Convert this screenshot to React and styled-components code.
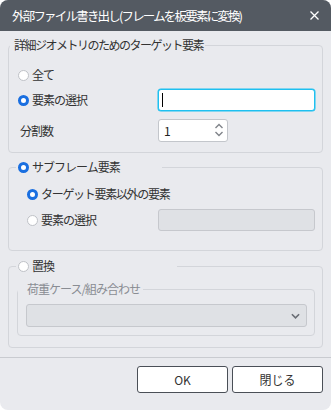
import React from 'react'
import styled, { createGlobalStyle } from 'styled-components'

const GlobalStyle = createGlobalStyle`
  html, body {
    margin: 0;
    padding: 0;
    background: #ffffff;
  }
  body {
    font-family: 'Noto Sans CJK JP', 'Noto Sans', sans-serif;
    font-size: 12px;
    letter-spacing: -1px;
    color: #333;
  }
`

function App() {
  return (
    <>
      <GlobalStyle />
      <Dialog>
        <TitleBar>
          <Title>外部ファイル書き出し(フレームを板要素に変換)</Title>
          <CloseIcon viewBox="0 0 9 9">
            <path d="M0.5 0.5 L8.5 8.5 M8.5 0.5 L0.5 8.5" />
          </CloseIcon>
        </TitleBar>

        <Body>
          <Group pad="18px 7px 11px 9px">
            <Legend width={186} left={1} indent={4} spacing={-1.5}>
              詳細ジオメトリのためのターゲット要素
            </Legend>
            <Row>
              <RadioLabel>
                <Radio />
                全て
              </RadioLabel>
            </Row>
            <Row top={3}>
              <RadioLabel>
                <Radio checked />
                要素の選択
              </RadioLabel>
              <TextInput focused>
                <Caret />
              </TextInput>
            </Row>
            <Row top={8}>
              <PlainLabel>分割数</PlainLabel>
              <Spinner>
                <span>1</span>
                <SpinArrows viewBox="0 0 10 16">
                  <path d="M1.5 6 L5 2.5 L8.5 6" />
                  <path d="M1.5 10 L5 13.5 L8.5 10" />
                </SpinArrows>
              </Spinner>
            </Row>
          </Group>

          <Group pad="15px 7px 19px 18px" top={14}>
            <Legend width={146} left={7} indent={2}>
              <RadioLabel>
                <Radio checked />
                サブフレーム要素
              </RadioLabel>
            </Legend>
            <Row>
              <RadioLabel spacing={-1.3}>
                <Radio checked />
                ターゲット要素以外の要素
              </RadioLabel>
            </Row>
            <Row top={4}>
              <RadioLabel>
                <Radio />
                要素の選択
              </RadioLabel>
              <TextInput disabled />
            </Row>
          </Group>

          <Group pad="22px 7px 11px 8px" top={15}>
            <Legend width={161} left={7} indent={2}>
              <RadioLabel>
                <Radio />
                置換
              </RadioLabel>
            </Legend>
            <InnerGroup>
              <Legend width={125} left={0} indent={9} muted>
                荷重ケース/組み合わせ
              </Legend>
              <Select>
                <ChevronDown viewBox="0 0 10 6">
                  <path d="M1 1 L5 5 L9 1" />
                </ChevronDown>
              </Select>
            </InnerGroup>
          </Group>
        </Body>

        <Footer>
          <Button>OK</Button>
          <Button>閉じる</Button>
        </Footer>
      </Dialog>
    </>
  )
}

export default App

const Dialog = styled.div`
  width: 331px;
  height: 410px;
  background: #e9eaee;
  border-radius: 8px;
  overflow: hidden;
  display: flex;
  flex-direction: column;
`

const TitleBar = styled.div`
  height: 31px;
  background: #545a62;
  display: flex;
  align-items: center;
  justify-content: space-between;
  padding: 0 12px 0 12px;
  flex-shrink: 0;
`

const Title = styled.div`
  color: #ffffff;
  font-size: 12.5px;
  letter-spacing: -1.8px;
  white-space: nowrap;
`

const CloseIcon = styled.svg`
  width: 9px;
  height: 9px;
  fill: none;
  stroke: #ffffff;
  stroke-width: 1.3;
`

const Body = styled.div`
  padding: 14px 8px 9px 8px;
  display: flex;
  flex-direction: column;
`

const Group = styled.div`
  position: relative;
  border: 1px solid #d3d5da;
  border-radius: 4px;
  padding: ${p => p.pad};
  margin-top: ${p => p.top || 0}px;
  display: flex;
  flex-direction: column;
`

const Legend = styled.div`
  position: absolute;
  top: -9px;
  left: ${p => p.left}px;
  min-width: ${p => p.width}px;
  box-sizing: border-box;
  padding: 0 2px 0 ${p => p.indent}px;
  background: #e9eaee;
  color: ${p => (p.muted ? '#8a8d93' : '#333')};
  line-height: 16px;
  font-size: 12px;
  letter-spacing: ${p => p.spacing ?? -1}px;
  white-space: nowrap;
`

const InnerGroup = styled.div`
  position: relative;
  border: 1px solid #d3d5da;
  border-radius: 4px;
  padding: 14px 7px 8px 8px;
`

const Row = styled.div`
  display: flex;
  align-items: center;
  justify-content: space-between;
  height: 22px;
  margin-top: ${p => p.top || 0}px;
`

const RadioLabel = styled.label`
  display: flex;
  align-items: center;
  gap: 3px;
  color: #333;
  font-size: 12px;
  line-height: 16px;
  letter-spacing: ${p => p.spacing ?? -1}px;
  white-space: nowrap;
`

const Radio = styled.span`
  width: 11px;
  height: 11px;
  border-radius: 50%;
  box-sizing: border-box;
  background: #fff;
  border: ${p => (p.checked ? '3px solid #1a6fe0' : '1px solid #bfc2c7')};
  display: inline-block;
  flex-shrink: 0;
`

const PlainLabel = styled.span`
  color: #333;
  padding-left: 2px;
`

const TextInput = styled.div`
  width: 157px;
  height: 22px;
  box-sizing: border-box;
  border-radius: 3px;
  border: 1px solid ${p => (p.focused ? '#1ec0f0' : '#c6c8cd')};
  box-shadow: ${p => (p.focused ? '0 0 0 0.5px #1ec0f0' : 'none')};
  background: ${p => (p.disabled ? '#dfe1e5' : '#fff')};
  display: flex;
  align-items: center;
  padding-left: 3px;
`

const Caret = styled.span`
  width: 1px;
  height: 14px;
  background: #000;
`

const Spinner = styled.div`
  width: 70px;
  height: 23px;
  box-sizing: border-box;
  border: 1px solid #c3c6cb;
  border-radius: 3px;
  background: #fff;
  display: flex;
  align-items: center;
  justify-content: space-between;
  padding: 0 3px 0 5px;
  margin-right: 87px;
  color: #222;
  font-size: 12px;
`

const SpinArrows = styled.svg`
  width: 10px;
  height: 16px;
  fill: none;
  stroke: #80848a;
  stroke-width: 1.4;
`

const Select = styled.div`
  height: 23px;
  box-sizing: border-box;
  border: 1px solid #c6c8cd;
  border-radius: 3px;
  background: #dfe1e5;
  display: flex;
  align-items: center;
  justify-content: flex-end;
  padding-right: 6px;
`

const ChevronDown = styled.svg`
  width: 9px;
  height: 6px;
  fill: none;
  stroke: #6a6e75;
  stroke-width: 1.8;
`

const Footer = styled.div`
  border-top: 1px solid #c9cbd0;
  flex: 1;
  display: flex;
  justify-content: flex-end;
  align-items: flex-start;
  gap: 4px;
  padding: 8px 8px 0 0;
`

const Button = styled.button`
  width: 91px;
  height: 27px;
  background: #fff;
  border: 1px solid #4a4f57;
  border-radius: 3px;
  font-family: 'Noto Sans CJK JP', 'Noto Sans', sans-serif;
  font-size: 12px;
  letter-spacing: 0;
  color: #333;
  padding: 0;
`
